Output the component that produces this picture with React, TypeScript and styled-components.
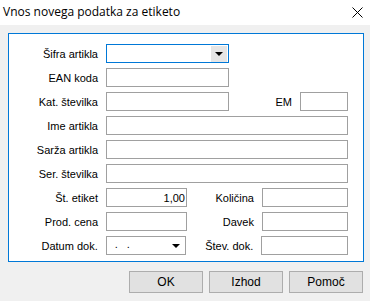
import React from "react";
import styled, { createGlobalStyle } from "styled-components";

const GlobalStyle = createGlobalStyle`
  html, body {
    margin: 0;
    padding: 0;
    background: #f0f0f0;
  }
  body {
    font-family: "Liberation Sans", Arial, sans-serif;
    font-size: 11px;
    color: #000;
  }
`;

type FieldProps = { $w: number; $focus?: boolean; $right?: boolean };

const App = () => {
  return (
    <>
      <GlobalStyle />
      <Window>
        <TitleBar>
          <Title>Vnos novega podatka za etiketo</Title>
          <CloseIcon viewBox="0 0 11 11">
            <path d="M0.5 0.5 L10.5 10.5 M10.5 0.5 L0.5 10.5" stroke="#000" strokeWidth="1" />
          </CloseIcon>
        </TitleBar>
        <Body>
          <Panel>
            <Row>
              <Label>Šifra artikla</Label>
              <Field $w={123} $focus>
                <DropButton $gray>
                  <Arrow />
                </DropButton>
              </Field>
            </Row>
            <Row>
              <Label>EAN koda</Label>
              <Field $w={123} />
            </Row>
            <Row>
              <Label>Kat. številka</Label>
              <Field $w={123} />
              <SideLabel $w={63}>EM</SideLabel>
              <Field $w={48} />
            </Row>
            <Row>
              <Label>Ime artikla</Label>
              <Field $w={242} />
            </Row>
            <Row>
              <Label>Sarža artikla</Label>
              <Field $w={242} />
            </Row>
            <Row>
              <Label>Ser. številka</Label>
              <Field $w={242} />
            </Row>
            <Row>
              <Label>Št. etiket</Label>
              <Field $w={81} $right>1,00</Field>
              <SideLabel $w={67}>Količina</SideLabel>
              <Field $w={86} />
            </Row>
            <Row>
              <Label>Prod. cena</Label>
              <Field $w={81} />
              <SideLabel $w={67}>Davek</SideLabel>
              <Field $w={86} />
            </Row>
            <Row>
              <Label>Datum dok.</Label>
              <Field $w={81}>
                <DateText>. .</DateText>
                <DropButton>
                  <Arrow />
                </DropButton>
              </Field>
              <SideLabel $w={67}>Štev. dok.</SideLabel>
              <Field $w={87} />
            </Row>
          </Panel>
          <Buttons>
            <Button>OK</Button>
            <Button>Izhod</Button>
            <Button>Pomoč</Button>
          </Buttons>
        </Body>
      </Window>
    </>
  );
};

export default App;

const Window = styled.div`
  width: 370px;
  height: 301px;
  display: flex;
  flex-direction: column;
  background: #f0f0f0;
  overflow: hidden;
`;

const TitleBar = styled.div`
  height: 25px;
  background: #fff;
  display: flex;
  align-items: center;
  justify-content: space-between;
  padding: 0 7px 0 3px;
  font-family: "Open Sans", "Liberation Sans", sans-serif;
`;

const Title = styled.div`
  font-size: 12px;
  margin-top: -2px;
`;

const CloseIcon = styled.svg`
  width: 11px;
  height: 11px;
  margin-top: -1px;
`;

const Body = styled.div`
  flex: 1;
  padding: 8px 6px 0 8px;
  display: flex;
  flex-direction: column;
`;

const Panel = styled.div`
  height: 229px;
  box-sizing: border-box;
  border: 1px solid #0078d7;
  background: #fff;
  padding: 10px 15px 0 0;
  display: flex;
  flex-direction: column;
  gap: 5px;
`;

const Row = styled.div`
  display: flex;
  align-items: center;
  height: 19px;
`;

const Label = styled.div`
  width: 89px;
  margin-right: 8px;
  text-align: right;
  white-space: nowrap;
`;

const SideLabel = styled.div<{ $w: number }>`
  width: ${({ $w }) => $w}px;
  margin-right: 8px;
  text-align: right;
  white-space: nowrap;
`;

const Field = styled.div<FieldProps>`
  position: relative;
  box-sizing: border-box;
  width: ${({ $w }) => $w}px;
  height: 19px;
  border: 1px solid ${({ $focus }) => ($focus ? "#0078d7" : "#a0a0a0")};
  background: #fff;
  display: flex;
  align-items: center;
  justify-content: ${({ $right }) => ($right ? "flex-end" : "space-between")};
  padding: ${({ $right }) => ($right ? "0 1px 0 4px" : "0 0 0 4px")};
`;

const DateText = styled.span`
  letter-spacing: 3px;
  margin-left: 4px;
  margin-top: -3px;
`;

const DropButton = styled.div<{ $gray?: boolean }>`
  width: 16px;
  height: 16px;
  margin-right: 1px;
  margin-left: auto;
  background: ${({ $gray }) => ($gray ? "#e5e5e5" : "transparent")};
  display: flex;
  align-items: center;
  justify-content: center;
`;

const Arrow = styled.span`
  width: 0;
  height: 0;
  border-left: 4px solid transparent;
  border-right: 4px solid transparent;
  border-top: 4px solid #000;
  margin-top: 1px;
`;

const Buttons = styled.div`
  display: flex;
  justify-content: flex-end;
  gap: 6px;
  margin-top: 9px;
  padding-right: 1px;
`;

const Button = styled.div`
  width: 74px;
  height: 22px;
  box-sizing: border-box;
  border: 1px solid #adadad;
  background: #e1e1e1;
  display: flex;
  align-items: center;
  justify-content: center;
  font-size: 12px;
`;
